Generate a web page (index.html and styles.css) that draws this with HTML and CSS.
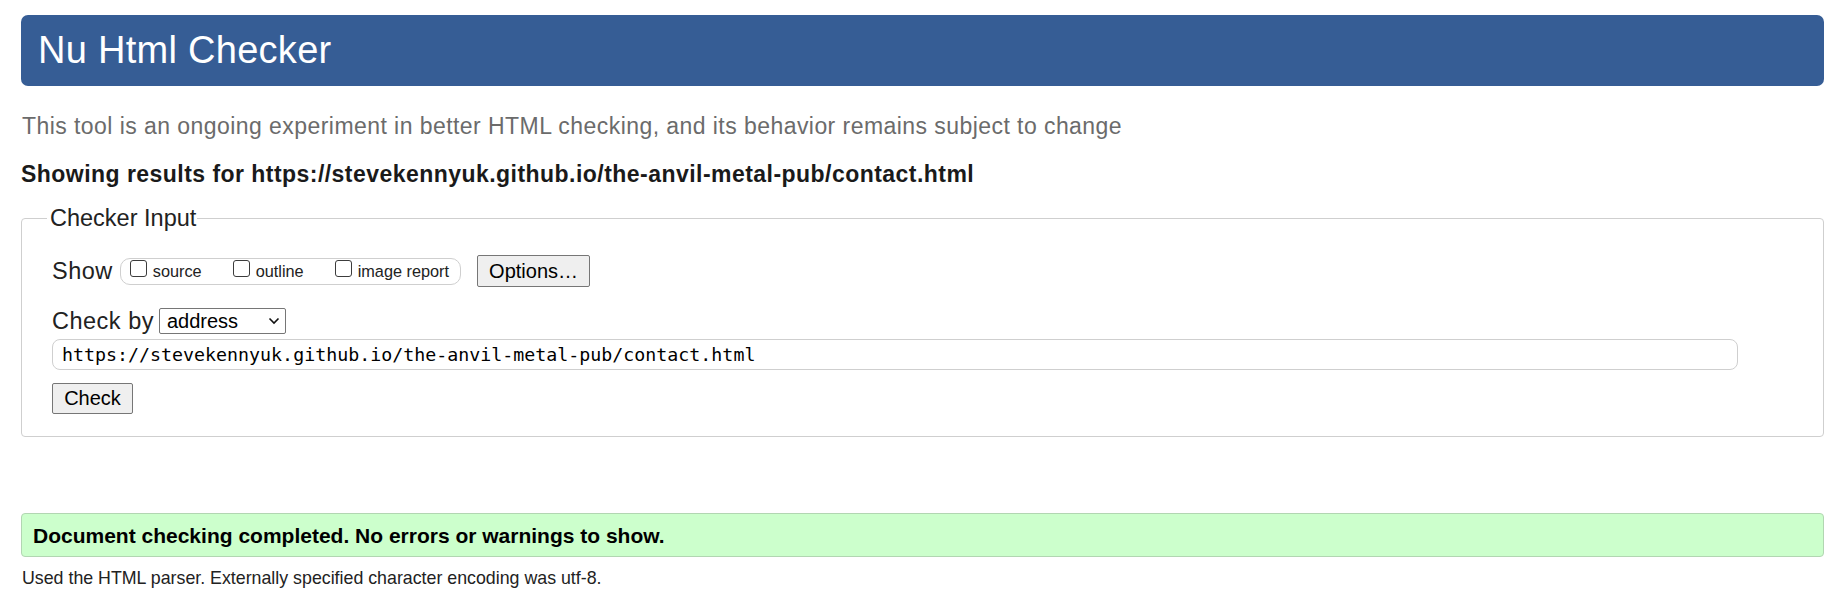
FILE: index.html
```html
<!DOCTYPE html>
<html lang="en">
<head>
<meta charset="utf-8">
<title>Nu Html Checker</title>
<link rel="stylesheet" href="styles.css">
</head>
<body>
<h1 class="title">Nu Html Checker</h1>
<p class="intro">This tool is an ongoing experiment in better HTML checking, and its behavior remains subject to change</p>
<p class="results-for">Showing results for https://stevekennyuk.github.io/the-anvil-metal-pub/contact.html</p>
<form class="checker-form">
  <fieldset class="checker-input">
    <legend class="legend">Checker Input</legend>
    <div class="show-row">
      <span class="row-label">Show</span>
      <span class="show-group">
        <label class="opt"><input type="checkbox" class="cb"><span class="opt-text">source</span></label>
        <label class="opt"><input type="checkbox" class="cb"><span class="opt-text">outline</span></label>
        <label class="opt"><input type="checkbox" class="cb"><span class="opt-text">image report</span></label>
      </span>
      <button type="button" class="btn options-btn">Options…</button>
    </div>
    <div class="checkby-row">
      <span class="row-label">Check by</span>
      <span class="select-wrap">
        <select class="select"><option>address</option></select>
        <svg class="chev" width="12" height="8" viewBox="0 0 12 8"><path d="M1.5 1.5 L6 6 L10.5 1.5" fill="none" stroke="#111" stroke-width="1.6"/></svg>
      </span>
    </div>
    <input class="url-input" type="text" value="https://stevekennyuk.github.io/the-anvil-metal-pub/contact.html">
    <button type="button" class="btn check-btn">Check</button>
  </fieldset>
</form>
<div class="success">Document checking completed. No errors or warnings to show.</div>
<p class="details">Used the HTML parser. Externally specified character encoding was utf-8.</p>
</body>
</html>
```

FILE: styles.css
```css
* { box-sizing: border-box; }
html, body { margin: 0; background: #fff; }
body {
  padding: 15px 17px 20px 21px;
  font-family: "Liberation Sans", Arial, sans-serif;
  color: #222;
}
.title {
  margin: 0;
  height: 71px;
  padding: 0 17px;
  background: #365d95;
  color: #fff;
  border-radius: 7px;
  font-size: 38px;
  letter-spacing: 0.28px;
  font-weight: normal;
  line-height: 71px;
}
.intro {
  margin: 27px 0 0 1px;
  font-size: 23px;
  letter-spacing: 0.44px;
  line-height: 26px;
  color: #6b6b6b;
}
.results-for {
  margin: 22px 0 0;
  font-size: 23px;
  letter-spacing: 0.46px;
  font-weight: bold;
  line-height: 26px;
  color: #1a1a1a;
}
.checker-form { margin: 19px 0 0; }
.checker-input {
  margin: 0;
  min-width: 0;
  border: 1px solid #cfcfcf;
  border-radius: 4px;
  padding: 25px 0 22px 30px;
}
.legend {
  margin-left: -5px;
  padding: 0 1px 0 3px;
  font-size: 23.5px;
  line-height: 24px;
  color: #222;
}
.show-row {
  display: flex;
  align-items: center;
  height: 32px;
}
.row-label {
  font-size: 23.5px;
  letter-spacing: 0.5px;
  line-height: 26px;
  color: #222;
}
.show-group {
  display: flex;
  align-items: flex-start;
  gap: 31px;
  height: 27px;
  margin-left: 7px;
  padding: 1px 11px 0 9px;
  border: 1px solid #cfcfcf;
  border-radius: 10px;
  font-size: 16.3px;
}
.opt {
  display: flex;
  align-items: baseline;
  gap: 6px;
  color: #222;
}
.opt-text { line-height: 19px; }
.cb {
  appearance: none;
  -webkit-appearance: none;
  margin: 0;
  width: 17px;
  height: 17px;
  border: 1px solid #3c3c3c;
  border-radius: 3px;
  background: #fff;
}
.btn {
  font-family: "Liberation Sans", Arial, sans-serif;
  font-size: 20px;
  color: #000;
  background: #efefef;
  border: 1px solid #767676;
  border-radius: 2px;
  padding: 0;
}
.options-btn {
  margin-left: 16px;
  width: 113px;
  height: 32px;
}
.checkby-row {
  display: flex;
  align-items: center;
  height: 26px;
  margin-top: 21px;
}
.select-wrap {
  position: relative;
  display: block;
  margin-left: 5px;
}
.select {
  appearance: none;
  -webkit-appearance: none;
  display: block;
  width: 127px;
  height: 26px;
  margin: 0;
  padding: 0 0 0 7px;
  border: 1px solid #767676;
  border-radius: 2px;
  background: #fff;
  color: #000;
  font-family: "Liberation Sans", Arial, sans-serif;
  font-size: 20px;
}
.chev {
  position: absolute;
  right: 6px;
  top: 9px;
}
.url-input {
  display: block;
  width: 95.2%;
  height: 31px;
  margin: 5px 0 0;
  padding: 0 9px;
  border: 1px solid #cfcfcf;
  border-radius: 8px;
  font-family: "DejaVu Sans Mono", "Liberation Mono", monospace;
  font-size: 18.3px;
  color: #000;
  background: #fff;
}
.check-btn {
  display: block;
  margin-top: 13px;
  width: 81px;
  height: 31px;
}
.success {
  margin-top: 76px;
  height: 44px;
  padding: 2px 11px 0;
  border: 1px solid #b2d6b2;
  border-radius: 4px;
  background: #ccffcc;
  font-size: 21px;
  font-weight: bold;
  line-height: 40px;
  color: #000;
}
.details {
  margin: 10px 0 0 1px;
  font-size: 17.8px;
  line-height: 22px;
  color: #222;
}
```
